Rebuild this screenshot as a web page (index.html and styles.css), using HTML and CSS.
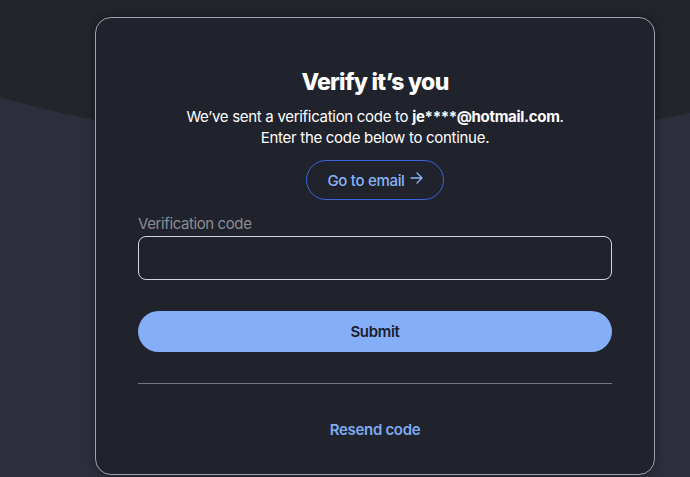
FILE: index.html
```html
<!DOCTYPE html>
<html lang="en">
<head>
<meta charset="utf-8">
<link rel="stylesheet" href="styles.css">
</head>
<body>
<main class="page">
  <section class="card">
    <h1 class="title">Verify it’s you</h1>
    <p class="lead">We’ve sent a verification code to <strong>je****@hotmail.com</strong>.<br>Enter the code below to continue.</p>
    <a class="email-btn" href="#">Go to email <svg class="arrow" width="13" height="12" viewBox="0 0 13 12" fill="none" stroke="currentColor" stroke-width="1.3" stroke-linecap="round" stroke-linejoin="round"><path d="M1 6h11M7 1l5 5-5 5"/></svg></a>
    <label class="field">
      <span class="field-label">Verification code</span>
      <input class="field-input" type="text">
    </label>
    <button class="submit" type="button">Submit</button>
    <hr class="divider">
    <a class="resend" href="#">Resend code</a>
  </section>
</main>
</body>
</html>
```
FILE: styles.css
```css
* { box-sizing: border-box; }
html, body { margin: 0; height: 100%; }
body {
  background:
    radial-gradient(600px 222px at 375px -76px, #23242c calc(100% - 1px), rgba(35,36,44,0) 100%),
    #2c2e3b;
  background-repeat: no-repeat;
  font-family: Inter, "Noto Sans", sans-serif;
  color: #ffffff;
  overflow: hidden;
}
.page {
  display: flex;
  justify-content: flex-start;
  padding: 17px 0 0 95px;
}
.card {
  flex: none;
  width: 560px;
  height: 458px;
  background: #21232c;
  border: 1px solid #a2a2b0;
  border-radius: 16px;
  padding: 50px 42px 0;
  display: flex;
  flex-direction: column;
  align-items: center;
  box-shadow: 0 0 8px rgba(0,0,0,0.35);
}
.title {
  margin: 0;
  font-size: 23px;
  line-height: 28px;
  font-weight: 800;
  letter-spacing: -0.7px;
}
.lead {
  margin: 10px 0 0;
  font-size: 15px;
  line-height: 21px;
  text-align: center;
  letter-spacing: -0.3px;
}
.lead strong { font-weight: 700; }
.email-btn {
  margin-top: 12px;
  height: 40px;
  width: 138px;
  border: 1px solid #3d63dd;
  border-radius: 20px;
  display: flex;
  align-items: center;
  justify-content: center;
  gap: 5px;
  color: #8ab4f8;
  text-decoration: none;
  font-size: 15px;
  font-weight: 500;
  letter-spacing: -0.3px;
}
.arrow { margin-top: -4px; }
.field {
  align-self: stretch;
  display: flex;
  flex-direction: column;
  margin-top: 14px;
}
.field-label {
  font-size: 15px;
  line-height: 20px;
  color: #8b8c95;
  letter-spacing: -0.4px;
  margin-bottom: 2px;
}
.field-input {
  height: 44px;
  border: 1px solid #d4d4dc;
  border-radius: 8px;
  background: #21232c;
  color: #fff;
  font: inherit;
  padding: 0 12px;
  outline: none;
}
.submit {
  align-self: stretch;
  margin-top: 31px;
  height: 41px;
  border: none;
  border-radius: 21px;
  background: #84aef8;
  color: #1b1d2b;
  font-family: inherit;
  font-size: 15px;
  font-weight: 600;
  letter-spacing: -0.3px;
}
.divider {
  align-self: stretch;
  margin: 31px 0 0;
  border: 0;
  border-top: 1px solid #777884;
}
.resend {
  margin-top: 36px;
  color: #7eaaf2;
  text-decoration: none;
  font-size: 15px;
  font-weight: 600;
  letter-spacing: -0.3px;
}
```
